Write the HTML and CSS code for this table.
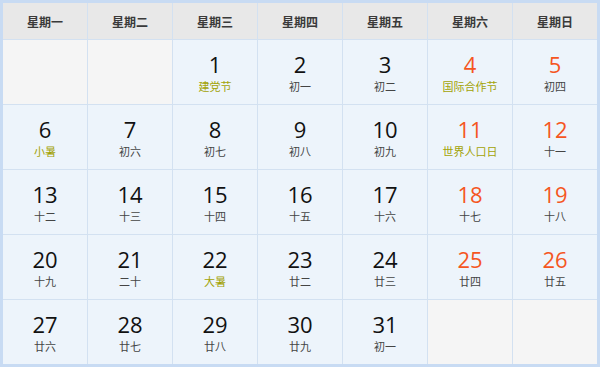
FILE: index.html
```html
<!DOCTYPE html>
<html lang="zh-CN">
<head>
<meta charset="utf-8">
<title>日历</title>
<link rel="stylesheet" href="styles.css">
</head>
<body>
<div class="cal">
  <div class="hd">星期一</div>
  <div class="hd">星期二</div>
  <div class="hd">星期三</div>
  <div class="hd">星期四</div>
  <div class="hd">星期五</div>
  <div class="hd">星期六</div>
  <div class="hd">星期日</div>

  <div class="cell empty"></div>
  <div class="cell empty"></div>
  <div class="cell"><span class="num">1</span><span class="lun fest">建党节</span></div>
  <div class="cell"><span class="num">2</span><span class="lun">初一</span></div>
  <div class="cell"><span class="num">3</span><span class="lun">初二</span></div>
  <div class="cell"><span class="num we">4</span><span class="lun fest">国际合作节</span></div>
  <div class="cell"><span class="num we">5</span><span class="lun">初四</span></div>

  <div class="cell"><span class="num">6</span><span class="lun fest">小暑</span></div>
  <div class="cell"><span class="num">7</span><span class="lun">初六</span></div>
  <div class="cell"><span class="num">8</span><span class="lun">初七</span></div>
  <div class="cell"><span class="num">9</span><span class="lun">初八</span></div>
  <div class="cell"><span class="num">10</span><span class="lun">初九</span></div>
  <div class="cell"><span class="num we">11</span><span class="lun fest">世界人口日</span></div>
  <div class="cell"><span class="num we">12</span><span class="lun">十一</span></div>

  <div class="cell"><span class="num">13</span><span class="lun">十二</span></div>
  <div class="cell"><span class="num">14</span><span class="lun">十三</span></div>
  <div class="cell"><span class="num">15</span><span class="lun">十四</span></div>
  <div class="cell"><span class="num">16</span><span class="lun">十五</span></div>
  <div class="cell"><span class="num">17</span><span class="lun">十六</span></div>
  <div class="cell"><span class="num we">18</span><span class="lun">十七</span></div>
  <div class="cell"><span class="num we">19</span><span class="lun">十八</span></div>

  <div class="cell"><span class="num">20</span><span class="lun">十九</span></div>
  <div class="cell"><span class="num">21</span><span class="lun">二十</span></div>
  <div class="cell"><span class="num">22</span><span class="lun fest">大暑</span></div>
  <div class="cell"><span class="num">23</span><span class="lun">廿二</span></div>
  <div class="cell"><span class="num">24</span><span class="lun">廿三</span></div>
  <div class="cell"><span class="num we">25</span><span class="lun">廿四</span></div>
  <div class="cell"><span class="num we">26</span><span class="lun">廿五</span></div>

  <div class="cell"><span class="num">27</span><span class="lun">廿六</span></div>
  <div class="cell"><span class="num">28</span><span class="lun">廿七</span></div>
  <div class="cell"><span class="num">29</span><span class="lun">廿八</span></div>
  <div class="cell"><span class="num">30</span><span class="lun">廿九</span></div>
  <div class="cell"><span class="num">31</span><span class="lun">初一</span></div>
  <div class="cell empty"></div>
  <div class="cell empty"></div>
</div>
</body>
</html>
```

FILE: styles.css
```css
html, body {
  margin: 0;
  padding: 0;
  background: #ffffff;
}

.cal {
  box-sizing: border-box;
  width: 600px;
  height: 367px;
  border: 3px solid #c8dbf3;
  background: #d3e1f1;
  display: grid;
  grid-template-columns: repeat(7, 84px);
  grid-template-rows: 36px repeat(5, 64px);
  gap: 1px;
  font-family: "Open Sans", "Noto Sans CJK SC", sans-serif;
}

.hd {
  background: #e8e8e8;
  display: flex;
  align-items: center;
  justify-content: center;
  font-family: "Noto Sans CJK SC", sans-serif;
  font-size: 12px;
  font-weight: bold;
  color: #3a3a3a;
}

.cell {
  background: #edf4fb;
  display: flex;
  flex-direction: column;
  align-items: center;
  padding-top: 10px;
  box-sizing: border-box;
}

.cell.empty {
  background: #f5f5f5;
}

.num {
  font-size: 22px;
  line-height: 28px;
  color: #111111;
}

.num.we {
  color: #f5561f;
}

.lun {
  font-family: "Noto Sans CJK SC", sans-serif;
  font-size: 11px;
  line-height: 16px;
  color: #444444;
}

.lun.fest {
  color: #a3a306;
}
```
